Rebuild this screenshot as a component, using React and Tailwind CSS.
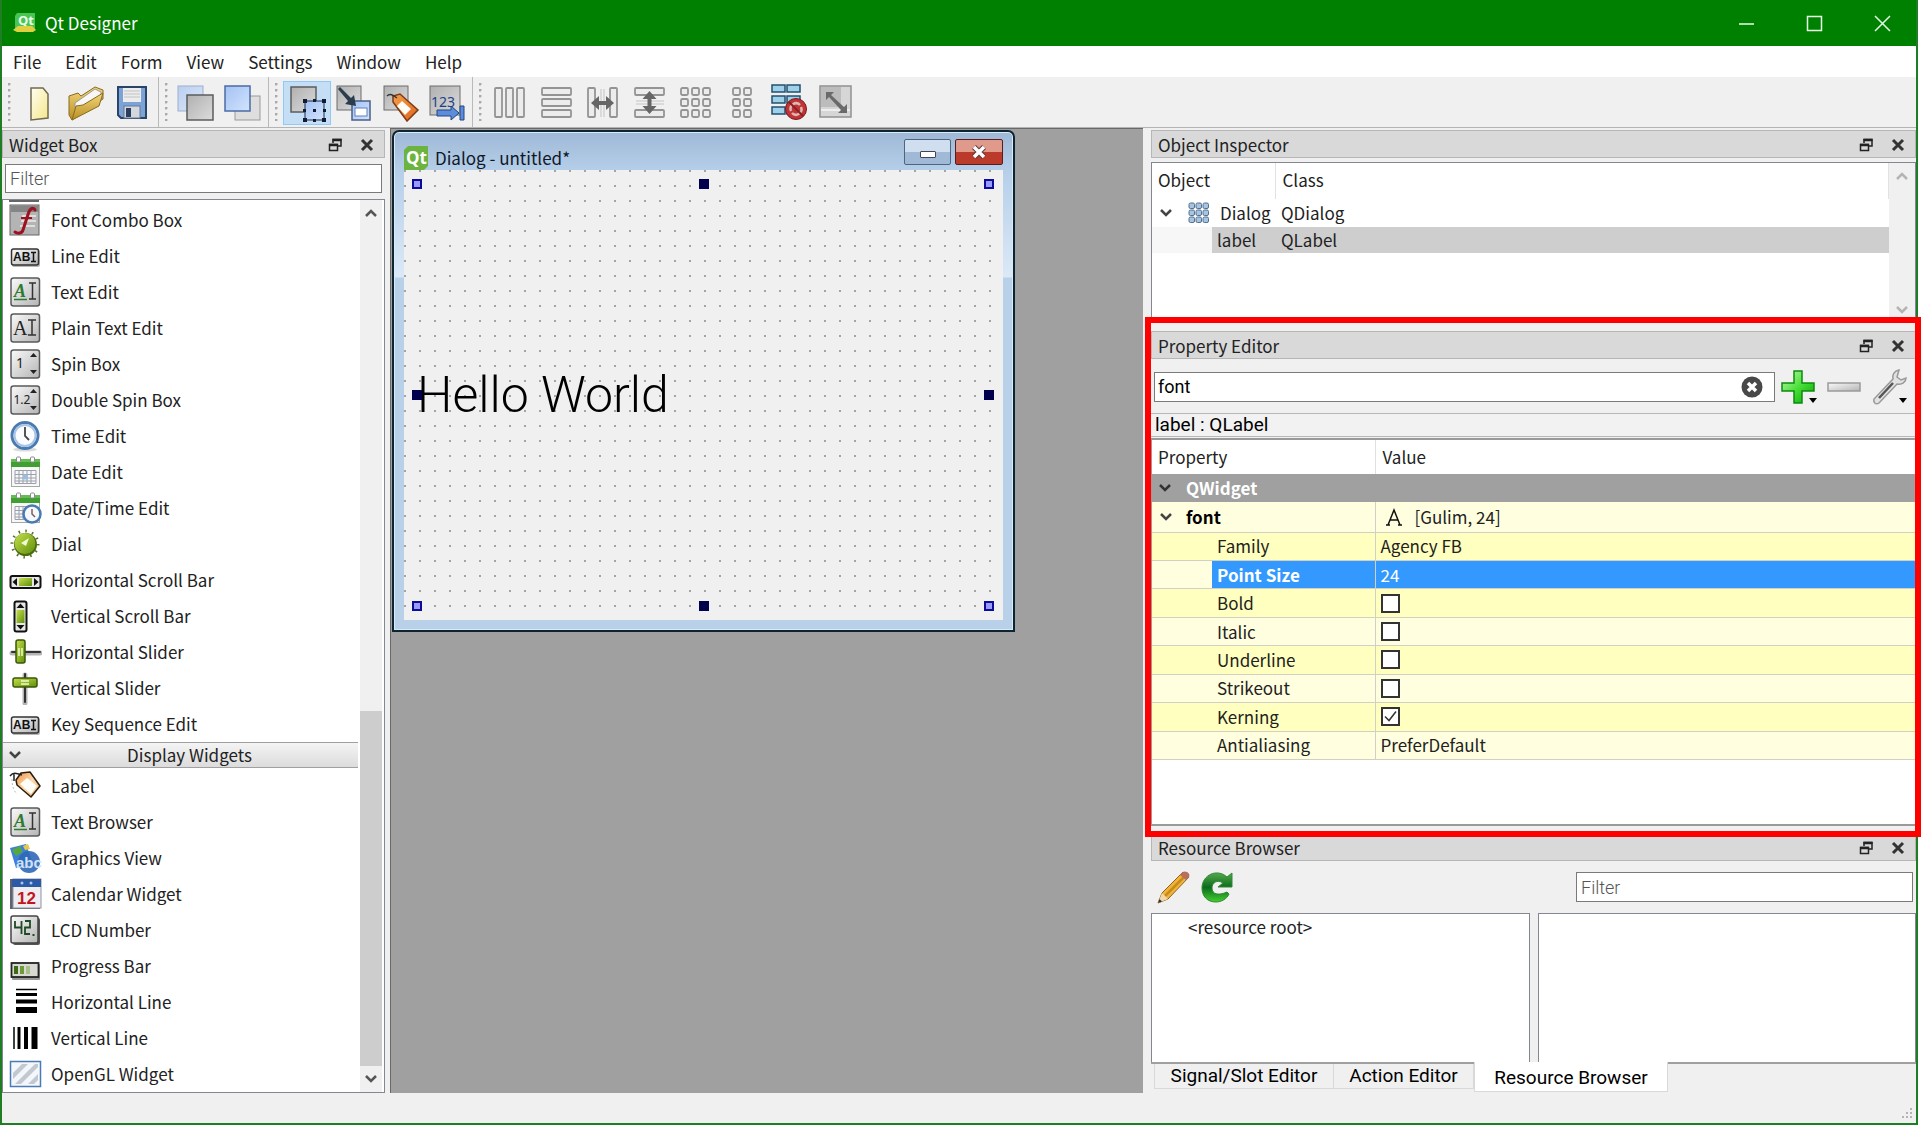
const widgetsTop = [
  ["Font Combo Box", "fontcombo"],
  ["Line Edit", "lineedit"],
  ["Text Edit", "textedit"],
  ["Plain Text Edit", "plaintext"],
  ["Spin Box", "spin"],
  ["Double Spin Box", "dspin"],
  ["Time Edit", "time"],
  ["Date Edit", "date"],
  ["Date/Time Edit", "datetime"],
  ["Dial", "dial"],
  ["Horizontal Scroll Bar", "hscroll"],
  ["Vertical Scroll Bar", "vscroll"],
  ["Horizontal Slider", "hslider"],
  ["Vertical Slider", "vslider"],
  ["Key Sequence Edit", "lineedit"],
]

const widgetsDisplay = [
  ["Label", "label"],
  ["Text Browser", "textedit"],
  ["Graphics View", "graphics"],
  ["Calendar Widget", "calendar"],
  ["LCD Number", "lcd"],
  ["Progress Bar", "progress"],
  ["Horizontal Line", "hline"],
  ["Vertical Line", "vline"],
  ["OpenGL Widget", "opengl"],
]

const fontRows = [
  { name: "Family", value: "Agency FB" },
  { name: "Point Size", value: "24", selected: true },
  { name: "Bold", checked: false },
  { name: "Italic", checked: false },
  { name: "Underline", checked: false },
  { name: "Strikeout", checked: false },
  { name: "Kerning", checked: true },
  { name: "Antialiasing", value: "PreferDefault" },
]

/* Gradients shared by all the icons below */
function IconDefs() {
  return (
    <svg className="absolute h-0 w-0" aria-hidden="true">
      <defs>
        <linearGradient id="metal" x1="0" y1="0" x2="1" y2="1">
          <stop offset="0" stopColor="#fafafa" />
          <stop offset="1" stopColor="#b4b4b4" />
        </linearGradient>
        <linearGradient id="grey" x1="0" y1="0" x2="1" y2="1">
          <stop offset="0" stopColor="#b0b0b0" />
          <stop offset="1" stopColor="#dcdcdc" />
        </linearGradient>
        <linearGradient id="blue" x1="0" y1="0" x2="1" y2="1">
          <stop offset="0" stopColor="#a3c2f3" />
          <stop offset="1" stopColor="#d3e3fd" />
        </linearGradient>
        <linearGradient id="lime" x1="0" y1="0" x2="1" y2="1">
          <stop offset="0" stopColor="#c5e04a" />
          <stop offset="1" stopColor="#5f8f0c" />
        </linearGradient>
        <linearGradient id="gold" x1="0" y1="0" x2="0" y2="1">
          <stop offset="0" stopColor="#f3d87c" />
          <stop offset="1" stopColor="#b98e22" />
        </linearGradient>
        <linearGradient id="paper" x1="0" y1="0" x2="1" y2="1">
          <stop offset="0" stopColor="#fffef0" />
          <stop offset="1" stopColor="#f5e68a" />
        </linearGradient>
        <linearGradient id="plus" x1="0" y1="0" x2="1" y2="1">
          <stop offset="0" stopColor="#c8f8b8" />
          <stop offset="0.5" stopColor="#4be03a" />
          <stop offset="1" stopColor="#00a400" />
        </linearGradient>
        <linearGradient id="leaf" x1="0" y1="0" x2="0" y2="1">
          <stop offset="0" stopColor="#55a84c" />
          <stop offset="0.5" stopColor="#0c6b1c" />
          <stop offset="1" stopColor="#43d02f" />
        </linearGradient>
        <linearGradient id="tag" x1="0" y1="0" x2="1" y2="1">
          <stop offset="0" stopColor="#f3a04c" />
          <stop offset="1" stopColor="#e0641c" />
        </linearGradient>
        <linearGradient id="tagLight" x1="0" y1="0" x2="1" y2="1">
          <stop offset="0" stopColor="#f0903c" />
          <stop offset="0.5" stopColor="#fbd9ae" />
          <stop offset="1" stopColor="#f0a860" />
        </linearGradient>
      </defs>
    </svg>
  )
}

function Calendar() {
  return (
    <>
      <rect x="2.5" y="4.5" width="28" height="26" fill="#f8f8f8" stroke="#a3aaa3" />
      <rect x="2" y="3" width="29" height="8" fill="#3f9f31" />
      <rect x="2" y="3" width="29" height="3" fill="#66bb55" />
      <path d="M6 14.500h21v13H6zM10 15v13M14 15v13M18 15v13M22 15v13M6 18.500h21M6 22h21M6 25h21" fill="none" stroke="#9aa0ac" />
      <path d="M14 18.500h5v5h-5z" fill="#9dbce0" />
      <rect x="7.5" y="1" width="4" height="5" rx="1" fill="#fff" stroke="#8a8a8a" />
      <rect x="21.5" y="1" width="4" height="5" rx="1" fill="#fff" stroke="#8a8a8a" />
    </>
  )
}

const Box = () => <rect x="2" y="2" width="28.5" height="28" rx="2.5" fill="url(#metal)" stroke="#5a5a5a" strokeWidth="1.5" />

const Arrows = () => <path d="M21 9l3.500-4 3.500 4zM21 22l3.500 4 3.500-4z" fill="#222" />

const drawings = {
  fontcombo: (
    <>
      <rect x="1" y="1" width="29" height="30" fill="#b4b4b4" stroke="#666" />
      <rect x="2" y="2" width="27" height="6" fill="#858585" />
      <path d="M13 12h14M12 17h15M11 22h15" stroke="#dedede" strokeWidth="2" />
      <path d="M26 6c-1-3-5-2-6.500 3L14 26c-1 3.500-5 4-8 2" fill="none" stroke="#9c1220" strokeWidth="3" strokeLinecap="round" />
      <path d="M12 14h11" stroke="#9c1220" strokeWidth="2" />
    </>
  ),
  lineedit: (
    <>
      <rect x="3" y="10" width="28" height="17" rx="2" fill="#b8b8b8" />
      <rect x="2.5" y="9" width="27" height="16" rx="2" fill="url(#metal)" stroke="#333" strokeWidth="1.5" />
      <text x="4" y="21" fontSize="12" fontWeight="700" fontFamily="Liberation Sans, sans-serif" fill="#111">AB</text>
      <path d="M22 12.500h5M22 21.500h5M24.500 12.500v9" stroke="#111" strokeWidth="1.5" />
    </>
  ),
  textedit: (
    <>
      <Box />
      <text x="5" y="20.5" fontSize="18" fontStyle="italic" fontWeight="700" fontFamily="Liberation Serif, serif" fill="#2d7a30">A</text>
      <path d="M5 23.500h13" stroke="#2d7a30" strokeWidth="1.5" />
      <path d="M20 7h7M20 23h7M23.500 7v16" stroke="#333" strokeWidth="1.5" fill="none" />
    </>
  ),
  plaintext: (
    <>
      <Box />
      <text x="4" y="23" fontSize="20" fontFamily="Liberation Serif, serif" fill="#222">A</text>
      <path d="M19 8h8M19 23h8M23 8v15" stroke="#333" strokeWidth="1.5" fill="none" />
    </>
  ),
  spin: (
    <>
      <Box />
      <text x="7" y="20" fontSize="14" fontFamily="Noto Sans, sans-serif" fill="#222">1</text>
      <Arrows />
    </>
  ),
  dspin: (
    <>
      <Box />
      <text x="4.5" y="20" fontSize="12" fontFamily="Noto Sans, sans-serif" fill="#222">1.2</text>
      <Arrows />
    </>
  ),
  time: (
    <>
      <ellipse cx="16" cy="29.5" rx="12" ry="2" fill="#dcdcdc" />
      <circle cx="16" cy="15.5" r="13" fill="#fbfcff" stroke="#4a7ab2" strokeWidth="3" />
      <circle cx="16" cy="15.5" r="10.5" fill="none" stroke="#a9c4e4" strokeWidth="2" />
      <path d="M16 7v9l4 4" fill="none" stroke="#444" strokeWidth="1.8" />
    </>
  ),
  date: <Calendar />,
  datetime: (
    <>
      <Calendar />
      <circle cx="23" cy="22" r="8.5" fill="#f5f8ff" stroke="#4a7ab2" strokeWidth="2.5" />
      <path d="M23 17v5l3 3" fill="none" stroke="#8a5a4a" strokeWidth="1.5" />
    </>
  ),
  dial: (
    <>
      <circle cx="16" cy="16" r="13" fill="none" stroke="#56701c" strokeWidth="3" strokeDasharray="1.5 5.3" />
      <circle cx="16.5" cy="16.5" r="11.5" fill="#4c6a12" />
      <circle cx="16" cy="15.5" r="10.5" fill="url(#lime)" />
      <path d="M20 10l-3 8-5-3z" fill="#f2fbd0" />
    </>
  ),
  hscroll: (
    <>
      <rect x="1.5" y="12" width="30" height="12" rx="2" fill="#e8e8e8" stroke="#111" strokeWidth="2" />
      <rect x="10" y="14" width="13" height="8" fill="url(#lime)" />
      <path d="M3.500 18l4.500-4v8zM29.500 18l-4.500-4v8z" fill="#111" />
    </>
  ),
  vscroll: (
    <>
      <rect x="5.5" y="1.5" width="12" height="30" rx="2" fill="#e8e8e8" stroke="#111" strokeWidth="2" />
      <rect x="7.5" y="10" width="8" height="13" fill="url(#lime)" />
      <path d="M11.500 3.500l-4 4.500h8zM11.500 29.500l-4-4.500h8z" fill="#111" />
    </>
  ),
  hslider: (
    <>
      <path d="M3 17h28" stroke="#b5b5b5" strokeWidth="5" strokeLinecap="round" />
      <path d="M3 16h28" stroke="#333" strokeWidth="2" strokeLinecap="round" />
      <rect x="7" y="4" width="9" height="23" rx="2" fill="url(#lime)" stroke="#3b5708" strokeWidth="1.5" />
      <path d="M10 12v8M13 12v8" stroke="#f2fbd0" strokeWidth="1.5" />
    </>
  ),
  vslider: (
    <>
      <path d="M16 3v28" stroke="#b5b5b5" strokeWidth="5" strokeLinecap="round" />
      <path d="M16 2v28" stroke="#333" strokeWidth="2" strokeLinecap="round" />
      <rect x="4" y="6" width="24" height="9" rx="2" fill="url(#lime)" stroke="#3b5708" strokeWidth="1.5" />
      <path d="M12 9h8M12 12h8" stroke="#f2fbd0" strokeWidth="1.5" />
    </>
  ),
  label: (
    <>
      <path d="M3 9c0 8 2 12 5 15" stroke="#bbb" strokeDasharray="2 2" fill="none" />
      <path d="M7 10l5-7 9-1 10 14-9 11L8 15z" fill="url(#tagLight)" stroke="#2a1c10" strokeWidth="1.5" strokeLinejoin="round" />
      <path d="M18 8l10 8-6 8-11-10z" fill="#fffdf8" />
      <path d="M1 6c3-4 6-3 12-1M5 3v8" fill="none" stroke="#222" strokeWidth="1.5" />
    </>
  ),
  graphics: (
    <>
      <path d="M1 6l16-4 6 17-16 7z" fill="#3e7fd8" />
      <path d="M3 8l8-4 3 6-7 4z" fill="#56a83c" />
      <path d="M14 4l5-2 2 5-5 1z" fill="#e6c84a" />
      <circle cx="20" cy="20" r="11" fill="#2f68b8" opacity="0.9" />
      <text x="7" y="26" fontSize="15" fontWeight="700" fontFamily="Liberation Sans, sans-serif" fill="#cfe2fa">abc</text>
    </>
  ),
  calendar: (
    <>
      <rect x="1" y="1" width="30" height="30" fill="#5c6470" />
      <rect x="4" y="1" width="28" height="29" fill="#eeeef2" stroke="#8d93a0" />
      <rect x="3" y="1" width="29" height="8" fill="#2c5aa5" />
      <circle cx="13" cy="5" r="1.5" fill="#a9c5ee" />
      <circle cx="22" cy="5" r="1.5" fill="#a9c5ee" />
      <text x="8" y="26" fontSize="17" fontWeight="700" fontFamily="Liberation Sans, sans-serif" fill="#c4141c">12</text>
    </>
  ),
  lcd: (
    <>
      <rect x="4" y="4" width="27" height="27" rx="2" fill="#555" />
      <rect x="2" y="2" width="27" height="27" rx="2" fill="url(#metal)" stroke="#444" strokeWidth="1.5" />
      <path d="M6 7v6.500h6M12.500 7v13M16 7h5v6.500h-5V20h5" fill="none" stroke="#1d4a22" strokeWidth="1.8" />
      <rect x="23.5" y="20" width="2" height="2" fill="#1d4a22" />
    </>
  ),
  progress: (
    <>
      <rect x="3" y="14" width="28" height="16" rx="1" fill="#999" />
      <rect x="2.5" y="13" width="27" height="14" fill="#d9d9d4" stroke="#222" strokeWidth="1.8" />
      <path d="M7 16v8" stroke="#3d6b14" strokeWidth="4" />
      <path d="M13 16v8" stroke="#6e9a3a" strokeWidth="4" />
      <path d="M19 16v8" stroke="#a8bf8c" strokeWidth="4" />
    </>
  ),
  hline: (
    <>
      <path d="M7 3.500h21" stroke="#000" strokeWidth="1.5" />
      <path d="M7 8.500h21" stroke="#000" strokeWidth="3" />
      <path d="M7 15.500h21" stroke="#000" strokeWidth="4" />
      <path d="M7 24h21" stroke="#000" strokeWidth="6" />
    </>
  ),
  vline: (
    <>
      <path d="M5 5v22" stroke="#000" strokeWidth="1.5" />
      <path d="M10 5v22" stroke="#000" strokeWidth="3" />
      <path d="M17 5v22" stroke="#000" strokeWidth="4" />
      <path d="M25.500 5v22" stroke="#000" strokeWidth="6" />
    </>
  ),
  opengl: (
    <>
      <rect x="1.5" y="3.5" width="30" height="25" fill="#f3f6fa" stroke="#4c7ab4" strokeWidth="1.5" />
      <path d="M4 15l9-9h6L4 21zM6 26L26 6h3v3L12 26zM19 26l10-10v6l-4 4z" fill="#c2c8d0" />
    </>
  ),
}

function Drawing({ name }) {
  return (
    <svg viewBox="0 0 33 33" className="h-[33px] w-[33px] shrink-0" aria-hidden="true">
      {drawings[name]}
    </svg>
  )
}

const cell = { fill: "#ececec", stroke: "#949494", strokeWidth: 1.8 }

const tools = {
  newFile: (
    <path d="M11 4h12l5 6v24l-17 2z" fill="url(#paper)" stroke="#6f6a50" strokeWidth="1.5" />
  ),
  open: (
    <>
      <path d="M2 12l9-3 3 3 14-9 8 3v9L5 36l-3-5z" fill="url(#gold)" stroke="#8a6a20" />
      <path d="M8 19l20-14 6 3v8L8 30z" fill="#f7f7f5" stroke="#9a9a90" />
      <path d="M9 22l7-1 20-12-4 13L5 36z" fill="url(#gold)" stroke="#8a6a20" />
    </>
  ),
  save: (
    <>
      <path d="M4 3h28v31H7l-3-3z" fill="#7ba3d8" stroke="#2a4468" strokeWidth="2" />
      <rect x="9" y="4" width="18" height="14" fill="#ececec" />
      <path d="M10 7h16M10 10h16M10 13h16" stroke="#c2c2c2" />
      <rect x="10" y="22" width="16" height="12" fill="#d3d8de" stroke="#6a7a90" />
      <rect x="12" y="24" width="5" height="9" fill="#2a3f60" />
    </>
  ),
  back: (
    <>
      <rect x="1" y="2" width="25" height="25" fill="url(#blue)" opacity="0.7" stroke="#7d94bb" />
      <rect x="10" y="11" width="26" height="25" fill="url(#grey)" stroke="#5c5c5c" strokeWidth="1.5" />
    </>
  ),
  front: (
    <>
      <rect x="11" y="12" width="25" height="24" fill="#dedede" stroke="#9a9a9a" />
      <rect x="1" y="2" width="25" height="25" fill="url(#blue)" stroke="#4b6ba5" strokeWidth="1.5" />
    </>
  ),
  widgets: (
    <>
      <rect x="3" y="3" width="25" height="25" fill="url(#grey)" stroke="#5c5c5c" strokeWidth="1.5" />
      <rect x="17" y="17" width="19" height="19" fill="url(#blue)" stroke="#1c2f52" />
      <path d="M15 15h4v4h-4zM25 15h3v3h-3zM34 15h4v4h-4zM15 25h3v3h-3zM35 25h3v3h-3zM15 34h4v4h-4zM25 35h3v3h-3zM34 34h4v4h-4zM25 25h3v3h-3z" fill="#101c34" />
    </>
  ),
  signals: (
    <>
      <rect x="2" y="2" width="24" height="24" fill="url(#grey)" stroke="#6c6c6c" />
      <rect x="17" y="17" width="18" height="19" fill="url(#blue)" stroke="#4a5f88" strokeWidth="1.5" />
      <rect x="20" y="24" width="12" height="8" fill="#fff" stroke="#5f7fc0" />
      <path d="M3 5l2-2 11 11 3-3 2 11-11-2 3-3z" fill="#2b3c4c" />
    </>
  ),
  buddies: (
    <>
      <rect x="2" y="2" width="24" height="24" fill="url(#grey)" stroke="#6c6c6c" />
      <path d="M11 18v-6l7-2 18 16-11 11z" fill="url(#tag)" stroke="#7c3a18" strokeWidth="1.5" />
      <path d="M20 17l9 8-6 6-8-9z" fill="#fffdf5" />
      <path d="M5 12c3-3 6-1 10 2" fill="none" stroke="#333" strokeWidth="1.5" />
    </>
  ),
  taborder: (
    <>
      <rect x="2" y="2" width="30" height="29" fill="url(#grey)" stroke="#6c6c6c" />
      <text x="3" y="23" fontSize="14" fontFamily="Noto Sans, sans-serif" fill="#1e3f8c">123</text>
      <path d="M9 26h14v-4l8 7-8 7v-4H9zM32 22h4v14h-4z" fill="#5b8ddb" stroke="#24457e" />
    </>
  ),
  hlayout: (
    <>
      <rect x="4" y="4" width="7" height="29" rx="1" {...cell} />
      <rect x="15" y="4" width="7" height="29" rx="1" {...cell} />
      <rect x="26" y="4" width="7" height="29" rx="1" {...cell} />
    </>
  ),
  vlayout: (
    <>
      <rect x="4" y="4" width="29" height="7" rx="1" {...cell} />
      <rect x="4" y="15" width="29" height="7" rx="1" {...cell} />
      <rect x="4" y="26" width="29" height="7" rx="1" {...cell} />
    </>
  ),
  hsplit: (
    <>
      <rect x="4" y="4" width="7" height="29" rx="1" {...cell} />
      <rect x="26" y="4" width="7" height="29" rx="1" {...cell} />
      <path d="M17 5v28M20 5v28" stroke="#c4c4c4" />
      <path d="M7 19l8-7v5h7v-5l8 7-8 7v-5h-7v5z" fill="#666" />
    </>
  ),
  vsplit: (
    <>
      <rect x="4" y="4" width="29" height="7" rx="1" {...cell} />
      <rect x="4" y="26" width="29" height="7" rx="1" {...cell} />
      <path d="M5 17h28M5 20h28" stroke="#c4c4c4" />
      <path d="M18.500 7l7 8h-5v7h5l-7 8-7-8h5v-7h-5z" fill="#666" />
    </>
  ),
  grid: [4, 15, 26].map((y) => [4, 15, 26].map((x) => <rect key={x + "-" + y} x={x} y={y} width="7" height="7" rx="1.5" {...cell} />)),
  form: [4, 15, 26].map((y) => [9, 20].map((x) => <rect key={x + "-" + y} x={x} y={y} width="7" height="7" rx="1.5" {...cell} />)),
  breakLayout: (
    <>
      {[1, 12, 23].map((y) => [2, 17].map((x) => <rect key={x + "-" + y} x={x} y={y} width="13" height="7" fill="#9fd0ea" stroke="#22506e" strokeWidth="1.5" />))}
      <circle cx="26" cy="25" r="10.5" fill="#c03438" stroke="#7c1a1e" />
      <path d="M21 27a5.500 5.500 0 0 1 9-6M31 23a5.500 5.500 0 0 1-9 6" fill="none" stroke="#dcb8b0" strokeWidth="2.5" />
      <path d="M19 18l14 14" stroke="#8c2024" strokeWidth="2" />
    </>
  ),
  adjust: (
    <>
      <rect x="3" y="2" width="31" height="31" fill="#d6d6d6" stroke="#909090" strokeWidth="1.5" />
      <path d="M4 3h20v20H4z" fill="#bcbcbc" />
      <path d="M4 26h29" stroke="#eee" strokeWidth="2" />
      <path d="M9 8h8l-3 3 13 12 3-3v9h-9l3-3L12 13l-3 3z" fill="#6a6a6a" />
    </>
  ),
}

function ToolIcon({ name }) {
  return (
    <svg viewBox="0 0 38 38" className="h-[38px] w-[38px]" aria-hidden="true">
      {tools[name]}
    </svg>
  )
}

function ToolGroup({ items, className, last }) {
  return (
    <div className={`flex items-stretch ${last ? "" : "border-r border-[#b9b9b9] pr-[2px]"}`}>
      <div className="flex w-[14px] justify-center py-[6px]">
        <div className="w-[3px] bg-[radial-gradient(circle_at_1px_1px,#a9a9a9_1px,transparent_2px)] bg-[size:3px_6px]" />
      </div>
      <div className={`flex items-center pt-[2px] ${className}`}>
        {items.map(([name, title]) => (
          <button
            key={name}
            title={title}
            aria-label={title}
            className={`flex h-[44px] flex-1 items-center justify-center ${name === "widgets" ? "border border-[#90c8f6] bg-[#c3def5]" : ""}`}
          >
            <ToolIcon name={name} />
          </button>
        ))}
      </div>
    </div>
  )
}

function QtLogo({ className }) {
  return (
    <svg viewBox="0 0 24 24" className={className} aria-hidden="true">
      <path d="M4 0h20v20l-4 4H0V4z" fill="#6cb33f" />
      <text x="2" y="18" fontSize="17" fontWeight="700" fontFamily="Open Sans, sans-serif" fill="#fff">Qt</text>
    </svg>
  )
}

function Chevron({ className, up }) {
  return (
    <svg viewBox="0 0 14 10" className={`h-[10px] w-[14px] shrink-0 ${className}`} fill="none" stroke="currentColor" strokeWidth="2.5" aria-hidden="true">
      <path d={up ? "M2 8l5-5 5 5" : "M2 2l5 5 5-5"} />
    </svg>
  )
}

function DockTitle({ children }) {
  return (
    <div className="flex h-[28px] shrink-0 items-center border border-[#b6b6b6] bg-[#d9d9d9] pt-[2px] pl-[6px] pr-[10px]">
      <h2 className="flex-1 leading-[24px]">{children}</h2>
      <button aria-label="Float" className="mr-[18px]">
        <svg viewBox="0 0 14 14" className="h-[14px] w-[14px]" fill="none" stroke="#222">
          <path d="M5 5V1.500h8V8h-3" strokeWidth="1.5" />
          <path d="M4.500 2h9" strokeWidth="2.5" />
          <path d="M1.500 6.500h8v6h-8z" strokeWidth="1.5" />
          <path d="M1 7h9" strokeWidth="2.5" />
        </svg>
      </button>
      <button aria-label="Close">
        <svg viewBox="0 0 14 14" className="h-[14px] w-[14px]" stroke="#333" strokeWidth="3">
          <path d="M2 2l10 10M12 2L2 12" />
        </svg>
      </button>
    </div>
  )
}

function WidgetItem({ label, icon }) {
  return (
    <li className="flex h-[36px] items-center gap-[9px] pl-[6px]">
      <Drawing name={icon} />
      <span>{label}</span>
    </li>
  )
}

function WidgetBox() {
  return (
    <section className="flex w-[383px] shrink-0 flex-col pt-[2px]">
      <DockTitle>Widget Box</DockTitle>
      <input
        aria-label="Filter widgets"
        placeholder="Filter"
        className="mx-[3px] my-[6px] h-[29px] shrink-0 border border-[#7a7a7a] bg-white px-[4px] font-['Roboto',sans-serif] text-[18px] font-light placeholder:text-[#555]"
      />
      <div className="flex min-h-0 flex-1 border border-[#828790] bg-white">
        <div className="min-w-0 flex-1 overflow-hidden">
          <div className="ml-[6px] h-[2px] w-[30px] bg-[#666]" />
          <ul>
            {widgetsTop.map(([label, icon]) => <WidgetItem key={label} label={label} icon={icon} />)}
          </ul>
          <div className="relative mr-[2px] flex h-[26px] items-center justify-center border-y border-[#a0a0a0] bg-linear-to-b from-[#f4f4f4] to-[#dcdcdc] pl-[18px]">
            <Chevron className="absolute left-[5px] text-[#444]" />
            Display Widgets
          </div>
          <ul>
            {widgetsDisplay.map(([label, icon]) => <WidgetItem key={label} label={label} icon={icon} />)}
          </ul>
        </div>
        <div className="mr-[2px] flex w-[22px] flex-col items-center bg-[#f0f0f0]">
          <Chevron up className="my-[8px] text-[#555]" />
          <div className="flex-[486]" />
          <div className="w-full flex-[355] bg-[#cdcdcd]" />
          <Chevron className="my-[8px] text-[#555]" />
        </div>
      </div>
    </section>
  )
}

function Handle({ className, corner }) {
  return <span className={`absolute h-[10px] w-[10px] ${corner ? "border-2 border-[#0c0c9a] bg-[#9a9af8]" : "bg-[#00004c]"} ${className}`} />
}

function FormWindow() {
  return (
    <div className="flex h-[502px] w-[623px] flex-col rounded-t-[7px] border-2 border-[#0e2430] bg-[linear-gradient(#9fb8d6,#b6cfe9_40px,#dbe9f7_145px,#b8d0e8_146px)] px-[10px] pb-[10px] shadow-[inset_0_0_0_1px_#d6ecf8]">
      <div className="flex h-[38px] shrink-0 items-center">
        <QtLogo className="mt-[13px] h-[24px] w-[24px]" />
        <span className="mt-[13px] ml-[7px] flex-1 text-[#101828]">Dialog - untitled*</span>
        <button aria-label="Minimize" className="mt-[2px] flex h-[26px] w-[47px] items-center justify-center rounded-[2px] border border-[#4d6580] bg-linear-to-b from-[#cfdff0] from-50% to-[#9fb9d6] to-50%">
          <span className="mt-[4px] h-[7px] w-[16px] rounded-[1px] border border-[#445] bg-white" />
        </button>
        <button aria-label="Close" className="mt-[2px] ml-[4px] flex h-[26px] w-[48px] items-center justify-center rounded-[2px] border border-[#5a1c1c] bg-linear-to-b from-[#e09a8c] from-50% to-[#bb3a2a] to-50%">
          <svg viewBox="0 0 16 14" className="h-[14px] w-[16px]">
            <path d="M3 2l10 10M13 2L3 12" stroke="#5a3a3a" strokeWidth="5.5" />
            <path d="M3 2l10 10M13 2L3 12" stroke="#fff" strokeWidth="3.5" />
          </svg>
        </button>
      </div>
      {/* Form canvas with the 10-unit snapping grid */}
      <div className="relative flex flex-1 items-center bg-[#f0f0f0] bg-[radial-gradient(circle_at_1px_1px,#a4a4a4_1px,transparent_1px)] bg-[size:15px_15px] pl-[13px]">
        <span className="font-['Roboto',sans-serif] text-[50px] leading-none font-light text-black">Hello World</span>
        <Handle corner className="top-[9px] left-[8px]" />
        <Handle className="top-[9px] left-1/2 -translate-x-1/2" />
        <Handle corner className="top-[9px] right-[9px]" />
        <Handle className="top-[220px] left-[8px]" />
        <Handle className="top-[220px] right-[9px]" />
        <Handle corner className="bottom-[9px] left-[8px]" />
        <Handle className="bottom-[9px] left-1/2 -translate-x-1/2" />
        <Handle corner className="right-[9px] bottom-[9px]" />
      </div>
    </div>
  )
}

function ObjectInspector() {
  return (
    <section className="flex h-[195px] shrink-0 flex-col pt-[2px]">
      <DockTitle>Object Inspector</DockTitle>
      <div className="mt-[4px] flex flex-1 border border-b-0 border-[#828790] bg-white">
        <div className="flex-1">
          <table className="w-full table-fixed text-left">
            <colgroup>
              <col className="w-[123px]" />
              <col />
            </colgroup>
            <thead>
              <tr className="h-[36px]">
                <th className="border-r border-[#e2e2e2] pb-[2px] pl-[6px] font-normal">Object</th>
                <th className="border-r border-[#e2e2e2] pb-[2px] pl-[7px] font-normal">Class</th>
              </tr>
            </thead>
            <tbody>
              <tr className="h-[28px]">
                <td>
                  <div className="flex items-center pl-[7px]">
                    <Chevron className="text-[#444]" />
                    <svg viewBox="0 0 22 22" className="mr-[10px] ml-[15px] h-[22px] w-[22px]" aria-hidden="true">
                      {[1, 8, 15].map((y) => [1, 8, 15].map((x) => <rect key={x + "-" + y} x={x} y={y} width="5.5" height="5.5" rx="1.5" fill="#a9c4e0" stroke="#52718f" />))}
                    </svg>
                    Dialog
                  </div>
                </td>
                <td className="pl-[6px]">QDialog</td>
              </tr>
              <tr className="h-[26px]">
                <td className="bg-[linear-gradient(90deg,#f7f7f7_60px,#cecece_60px)] pl-[65px]">label</td>
                <td className="bg-[#cecece] pl-[6px]">QLabel</td>
              </tr>
            </tbody>
          </table>
        </div>
        <div className="flex w-[26px] flex-col items-center justify-between bg-[#f0f0f0] py-[8px]">
          <Chevron up className="text-[#b4b4b4]" />
          <Chevron className="text-[#b4b4b4]" />
        </div>
      </div>
    </section>
  )
}

function CheckCell({ name, checked }) {
  return (
    <span className="grid h-[19px] w-[19px]">
      <input
        type="checkbox"
        id={name}
        defaultChecked={checked}
        className="peer col-start-1 row-start-1 h-[19px] w-[19px] appearance-none border-2 border-[#333] bg-white"
      />
      <svg viewBox="0 0 19 19" className="pointer-events-none invisible col-start-1 row-start-1 h-[19px] w-[19px] peer-checked:visible" fill="none" stroke="#333" strokeWidth="1.5">
        <path d="M4 9.500l4 4 7-9" />
      </svg>
    </span>
  )
}

function PropertyRow({ row, odd }) {
  const shade = odd ? "bg-[#ffffdf]" : "bg-[#ffffbf]"
  const nameTone = row.selected
    ? "bg-[linear-gradient(90deg,#ffffdf_60px,#3399ff_60px)] font-bold text-white"
    : shade
  return (
    <tr className="border-b border-[#d0d0c4]">
      <td className={`border-r border-[#d0d0c4] pl-[65px] ${nameTone}`}>
        {row.value === undefined ? <label htmlFor={row.name}>{row.name}</label> : row.name}
      </td>
      <td className={`pl-[5px] ${row.selected ? "bg-[#3399ff] text-white" : shade}`}>
        {row.value === undefined ? <CheckCell name={row.name} checked={row.checked} /> : row.value}
      </td>
    </tr>
  )
}

function PropertyEditor() {
  return (
    <section className="relative flex min-h-0 flex-1 flex-col pt-[8px] pb-[5px]">
      <DockTitle>Property Editor</DockTitle>
      <div className="flex h-[54px] shrink-0 items-center pt-[2px] pr-[8px] pl-[3px]">
        <div className="flex h-[30px] flex-1 items-center border border-[#7a7a7a] bg-white pr-[11px]">
          <input
            aria-label="Filter properties"
            defaultValue="font"
            className="min-w-0 flex-1 px-[3px] font-['Roboto',sans-serif] text-[18px] text-black outline-none"
          />
          <button aria-label="Clear filter">
            <svg viewBox="0 0 22 22" className="h-[22px] w-[22px]">
              <circle cx="11" cy="11" r="10.5" fill="#484848" />
              <path d="M7 7l8 8M15 7l-8 8" stroke="#fff" strokeWidth="3.5" />
            </svg>
          </button>
        </div>
        <button aria-label="Add property" className="ml-[6px]">
          <svg viewBox="0 0 36 36" className="h-[36px] w-[36px]">
            <path d="M13 2h8v12h12v8H21v12h-8V22H1v-8h12z" fill="url(#plus)" stroke="#0d8a0d" strokeWidth="1.5" />
            <path d="M28 29h8l-4 5z" fill="#000" />
          </svg>
        </button>
        <button aria-label="Remove property" className="ml-[9px]">
          <svg viewBox="0 0 36 36" className="h-[36px] w-[36px]">
            <rect x="2" y="14" width="32" height="8" fill="url(#metal)" stroke="#9a9a9a" strokeWidth="1.5" />
          </svg>
        </button>
        <button aria-label="Configure" className="ml-[8px]">
          <svg viewBox="0 0 38 38" className="h-[38px] w-[38px]">
            <path d="M29 2c-5 1-7 5-6 9L4 31c-1 4 2 6 5 4l18-19c5 1 9-2 9-6l-5 2-4-3z" fill="#e2e2e2" stroke="#999" strokeWidth="1.5" />
            <path d="M9 30l14-15" stroke="#555" strokeWidth="2.5" />
            <path d="M29 30h8l-4 5z" fill="#000" />
          </svg>
        </button>
      </div>
      <div className="h-[24px] shrink-0 border-y border-[#b8b8b8] bg-[#f2f2f2] pl-[4px] font-['Roboto',sans-serif] text-[19px] leading-[21px] text-black">
        label : QLabel
      </div>
      <div className="mt-[1px] min-h-0 flex-1 border-y-2 border-l border-[#9a9a9a] bg-white">
        <table className="h-[320px] w-full table-fixed border-collapse text-left">
          <colgroup>
            <col className="w-[223px]" />
            <col />
          </colgroup>
          <thead>
            <tr className="h-[34px]">
              <th className="border-r border-[#e0e0e0] pl-[6px] font-normal">Property</th>
              <th className="pl-[7px] font-normal">Value</th>
            </tr>
          </thead>
          <tbody>
            <tr className="h-[28px] bg-[#a0a0a0] text-white">
              <td colSpan={2}>
                <div className="flex items-center gap-[14px] pl-[6px] font-bold">
                  <Chevron className="text-[#333]" />
                  QWidget
                </div>
              </td>
            </tr>
            <tr className="h-[30px] border-b border-[#d0d0c4] bg-[#ffffdf]">
              <td className="border-r border-[#d0d0c4]">
                <div className="flex items-center gap-[13px] pl-[7px] font-bold text-black">
                  <Chevron className="text-[#444]" />
                  font
                </div>
              </td>
              <td>
                <div className="flex items-center pl-[10px]">
                  <svg viewBox="0 0 16 18" className="mr-[13px] h-[18px] w-[16px]" fill="none" stroke="#111" strokeWidth="1.5">
                    <path d="M2 17L8 2l6 15M4 12h8M0 17h4M12 17h4" />
                  </svg>
                  [Gulim, 24]
                </div>
              </td>
            </tr>
            {fontRows.map((row, i) => <PropertyRow key={row.name} row={row} odd={i % 2 === 1} />)}
          </tbody>
        </table>
      </div>
      {/* Highlight frame drawn over the dock edges */}
      <div className="pointer-events-none absolute -inset-y-[6px] -right-[5px] -left-[6px] z-10 border-6 border-[#ff0000]" />
    </section>
  )
}

function ResourceBrowser() {
  return (
    <section className="flex h-[262px] shrink-0 flex-col pt-[2px]">
      <DockTitle>Resource Browser</DockTitle>
      <div className="flex h-[52px] shrink-0 items-center justify-between pr-[3px] pl-[6px]">
        <div className="flex gap-[9px]">
          <button aria-label="Edit resources">
            <svg viewBox="0 0 34 34" className="h-[34px] w-[34px]">
              <path d="M1 33l4-10L26 2l6 5L11 29z" fill="#f0b43a" stroke="#8c6420" />
              <path d="M8 26L29 5" stroke="#c98a1c" strokeWidth="2.5" />
              <path d="M26 2c3-2 8 2 6 5l-3 3-6-5z" fill="#b8705c" />
              <path d="M1 33l4-10 6 6z" fill="#f0d8ac" />
              <path d="M1 33l1.500-4 2.500 2.500z" fill="#333" />
            </svg>
          </button>
          <button aria-label="Reload">
            <svg viewBox="0 0 34 34" className="h-[34px] w-[34px]">
              <path d="M32 3v14H18l5-4c-6-4-11 0-11 5 0 6 6 8 15 4l2 2c-2 5-8 8-13 8C7 32 2 26 2 18 2 5 17-2 27 7z" fill="url(#leaf)" stroke="#2c8a30" />
            </svg>
          </button>
        </div>
        <input
          aria-label="Filter resources"
          placeholder="Filter"
          className="h-[30px] w-[337px] border border-[#7a7a7a] bg-white px-[4px] font-['Roboto',sans-serif] text-[18px] font-light placeholder:text-[#555]"
        />
      </div>
      <div className="grid min-h-0 flex-1 grid-cols-2 gap-[8px] border-b-2 border-[#a0a0a0]">
        <div className="border border-b-0 border-[#828790] bg-white pt-[2px] pl-[36px]">&lt;resource root&gt;</div>
        <div className="border border-b-0 border-[#828790] bg-white" />
      </div>
      <div className="flex h-[29px] shrink-0 items-start pl-[3px] font-['Roboto',sans-serif] text-[19px] text-black">
        <button className="h-[25px] w-[180px] border border-t-0 border-[#d9d9d9] leading-[24px]">Signal/Slot Editor</button>
        <button className="h-[25px] w-[140px] border border-t-0 border-l-0 border-[#d9d9d9] leading-[24px]">Action Editor</button>
        <button className="-mt-[2px] h-[30px] w-[194px] border border-t-0 border-[#d9d9d9] bg-white pt-[2px] leading-[28px]">Resource Browser</button>
      </div>
    </section>
  )
}

export default function App() {
  return (
    <div className="h-screen bg-white pr-[3px] font-['Noto_Sans_CJK_KR',sans-serif] text-[17px] leading-[22px] text-[#222]">
      <IconDefs />
      <div className="flex h-full flex-col border-2 border-t-0 border-[#1f7d24] bg-[#f0f0f0]">
        <header className="flex h-[46px] shrink-0 items-center bg-[#008000] pl-[11px] text-white">
          <svg viewBox="0 0 24 22" className="h-[22px] w-[24px]" aria-hidden="true">
            <path d="M4 1h18v16H2V4z" fill="#4cc455" />
            <text x="5" y="13" fontSize="13" fontWeight="700" fontFamily="Open Sans, sans-serif" fill="#e6ffe6">Qt</text>
            <path d="M0 18l5-4h14l4 4-3 2H4z" fill="#e0d040" />
          </svg>
          <h1 className="ml-[8px] flex-1">Qt Designer</h1>
          <div className="flex gap-[51px] pr-[25px]">
            {[["Minimize", "M1 9h15"], ["Maximize", "M1.500 1.500h14v14h-14z"], ["Close", "M1 1l15 15M16 1L1 16"]].map(([label, d]) => (
              <button key={label} aria-label={label}>
                <svg viewBox="0 0 17 17" className="h-[17px] w-[17px]" fill="none" stroke="#e4ffe4" strokeWidth="1.5">
                  <path d={d} />
                </svg>
              </button>
            ))}
          </div>
        </header>

        <nav className="flex h-[31px] shrink-0 items-center gap-[24px] bg-white pl-[11px]">
          {["File", "Edit", "Form", "View", "Settings", "Window", "Help"].map((item) => (
            <button key={item}>{item}</button>
          ))}
        </nav>

        <div className="flex h-[51px] shrink-0 border-b border-[#b4b4b4]">
          <ToolGroup className="w-[140px]" items={[["newFile", "New"], ["open", "Open"], ["save", "Save"]]} />
          <ToolGroup className="w-[93px]" items={[["back", "Send to Back"], ["front", "Bring to Front"]]} />
          <ToolGroup
            className="w-[187px]"
            items={[["widgets", "Edit Widgets"], ["signals", "Edit Signals/Slots"], ["buddies", "Edit Buddies"], ["taborder", "Edit Tab Order"]]}
          />
          <ToolGroup
            last
            className="w-[372px]"
            items={[
              ["hlayout", "Lay Out Horizontally"],
              ["vlayout", "Lay Out Vertically"],
              ["hsplit", "Lay Out Horizontally in Splitter"],
              ["vsplit", "Lay Out Vertically in Splitter"],
              ["grid", "Lay Out in a Grid"],
              ["form", "Lay Out in a Form Layout"],
              ["breakLayout", "Break Layout"],
              ["adjust", "Adjust Size"],
            ]}
          />
        </div>

        <div className="flex min-h-0 flex-1">
          <WidgetBox />
          <main className="ml-[5px] min-w-0 flex-1 border-t border-l border-[#696969] bg-[#a0a0a0] pt-[1px] pl-[1px]">
            <FormWindow />
          </main>
          <aside className="ml-[8px] flex w-[765px] shrink-0 flex-col">
            <ObjectInspector />
            <PropertyEditor />
            <ResourceBrowser />
          </aside>
        </div>

        <footer className="flex h-[30px] shrink-0 items-end justify-end pr-[3px] pb-[3px]">
          <svg viewBox="0 0 12 12" className="h-[12px] w-[12px]" fill="#b4b4b4" aria-hidden="true">
            <path d="M9 0h2v2H9zM9 4h2v2H9zM9 8h2v2H9zM5 4h2v2H5zM5 8h2v2H5zM1 8h2v2H1z" />
          </svg>
        </footer>
      </div>
    </div>
  )
}
